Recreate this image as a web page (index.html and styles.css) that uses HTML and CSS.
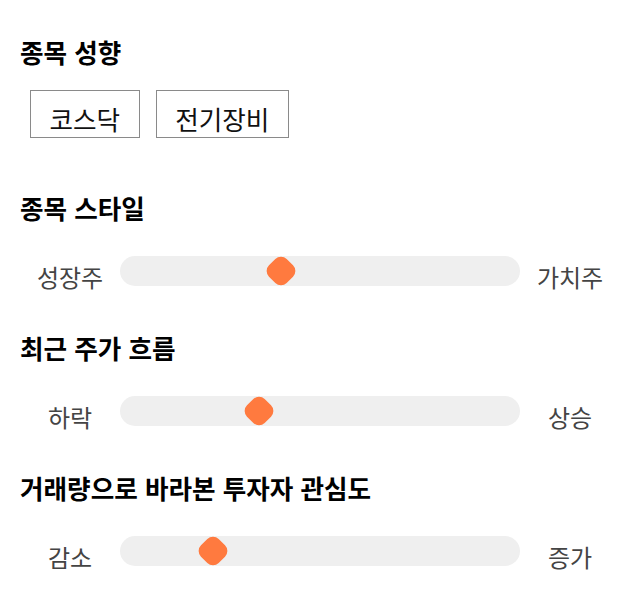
FILE: index.html
```html
<!DOCTYPE html>
<html lang="ko">
<head>
<meta charset="utf-8">
<title>종목 성향</title>
<link rel="stylesheet" href="styles.css">
</head>
<body>
<section class="sec sec-first">
  <h2 class="title">종목 성향</h2>
  <div class="chips">
    <span class="chip">코스닥</span>
    <span class="chip">전기장비</span>
  </div>
</section>
<section class="sec">
  <h2 class="title">종목 스타일</h2>
  <div class="slider">
    <span class="label">성장주</span>
    <div class="track"><span class="thumb" style="left: 40.25%"></span></div>
    <span class="label">가치주</span>
  </div>
</section>
<section class="sec">
  <h2 class="title">최근 주가 흐름</h2>
  <div class="slider">
    <span class="label">하락</span>
    <div class="track"><span class="thumb" style="left: 34.75%"></span></div>
    <span class="label">상승</span>
  </div>
</section>
<section class="sec">
  <h2 class="title">거래량으로 바라본 투자자 관심도</h2>
  <div class="slider">
    <span class="label">감소</span>
    <div class="track"><span class="thumb" style="left: 23.25%"></span></div>
    <span class="label">증가</span>
  </div>
</section>
</body>
</html>
```
FILE: styles.css
```css
html, body {
  margin: 0;
  padding: 0;
  background: #ffffff;
}
body {
  font-family: "Noto Sans CJK KR", "Noto Sans", sans-serif;
  padding: 36px 20px 0 20px;
  color: #111;
}
.sec {
  margin-bottom: 46px;
}
.sec-first {
  margin-bottom: 54px;
}
.title {
  margin: 0;
  font-size: 25.6px;
  font-weight: 700;
  line-height: 32px;
  color: #000;
}
.chips {
  display: flex;
  gap: 16px;
  margin-top: 22px;
  padding-left: 10px;
}
.chip {
  box-sizing: border-box;
  display: flex;
  align-items: center;
  justify-content: center;
  height: 48px;
  padding: 9px 18.5px 0 18.5px;
  border: 1px solid #8a8a8a;
  font-size: 25.6px;
  color: #111;
}
.slider {
  display: grid;
  grid-template-columns: 100px 1fr 100px;
  align-items: start;
  margin-top: 32px;
  height: 30px;
}
.label {
  text-align: center;
  font-size: 24px;
  line-height: 30px;
  margin-top: 6px;
  color: #444;
}
.track {
  position: relative;
  height: 30px;
  background: #efefef;
  border-radius: 15px;
}
.thumb {
  position: absolute;
  top: 50%;
  width: 25px;
  height: 25px;
  background: #ff7a3f;
  border-radius: 8px;
  transform: translate(-50%, -50%) rotate(45deg);
}
```
